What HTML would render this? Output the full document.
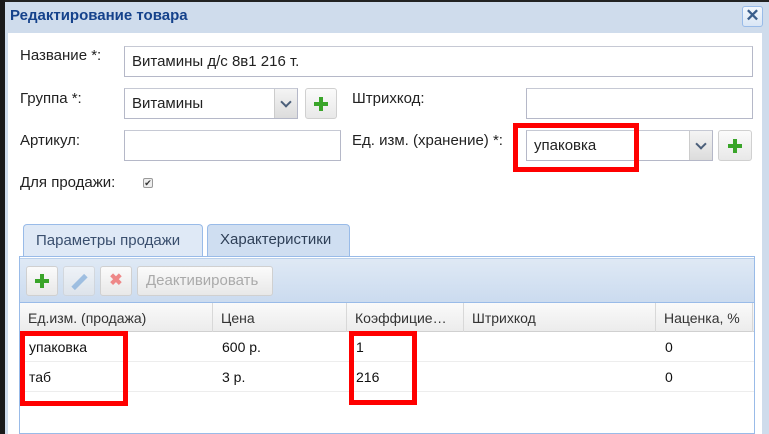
<!DOCTYPE html>
<html><head><meta charset="utf-8"><style>
*{box-sizing:border-box}
body{margin:0;width:769px;height:434px;overflow:hidden;background:#cfdcec;font-family:"Liberation Sans",sans-serif;font-size:14px;color:#222;position:relative}
.a{position:absolute}
.inp{position:absolute;background:#fff;border:1px solid #b5b8c8;border-top-color:#c6c9d4;height:31px;padding:6px 7px;font-size:15px}
.trig{position:absolute;top:0;right:0;width:23px;height:29px;background:linear-gradient(#f4f4f4,#dcdcdc);border-left:1px solid #ccc}
.trig:after{content:"";position:absolute;left:7px;top:9px;width:6px;height:6px;border-right:2px solid #4b5f7a;border-bottom:2px solid #4b5f7a;transform:rotate(45deg)}
.btn{position:absolute;border:1px solid #d0d0d0;border-radius:3px;background:linear-gradient(#fbfbfb,#e8e8e8);height:31px}
.plus{position:absolute;left:50%;top:50%;width:14px;height:14px;margin:-7px}
.plus:before,.plus:after{content:"";position:absolute;background:#3aa52a}
.plus:before{left:5px;top:0;width:4px;height:14px}.plus:after{top:5px;left:0;height:4px;width:14px}
.lbl{position:absolute;font-size:15px;color:#222}
.red{position:absolute;border:5px solid #f00}
.th{position:absolute;top:303px;height:29px;border-right:1px solid #d8d8d8;padding:7px 8px;font-size:14px;color:#333}
.td{position:absolute;font-size:14px;color:#111}
</style></head><body>
<div class="a" style="left:0;top:0;width:769px;height:2px;background:#222"></div>
<div class="a" style="left:0;top:0;width:5px;height:434px;background:#1a1a1a"></div>
<div class="a" style="left:10px;top:7px;font-weight:bold;font-size:15px;color:#15428b">Редактирование товара</div>
<div class="a" style="left:742px;top:6px;width:21px;height:21px;border:1px solid #99bbe8;border-radius:3px;background:linear-gradient(#f4f8fd,#d9e6f5);color:#3a5e8c;font-weight:bold;font-size:17px;text-align:center;line-height:18px">✕</div>
<div class="a" style="left:8px;top:33px;width:754px;height:401px;background:#fff"></div>

<div class="lbl" style="left:20px;top:47px">Название *:</div>
<div class="inp" style="left:124px;top:46px;width:629px">Витамины д/с 8в1 216 т.</div>
<div class="lbl" style="left:20px;top:90px">Группа *:</div>
<div class="inp" style="left:124px;top:88px;width:174px">Витамины<div class="trig"></div></div>
<div class="btn" style="left:305px;top:88px;width:32px"><div class="plus"></div></div>
<div class="lbl" style="left:352px;top:90px">Штрихкод:</div>
<div class="inp" style="left:526px;top:88px;width:227px"></div>
<div class="lbl" style="left:20px;top:132px">Артикул:</div>
<div class="inp" style="left:124px;top:130px;width:217px"></div>
<div class="lbl" style="left:352px;top:132px">Ед. изм. (хранение) *:</div>
<div class="inp" style="left:526px;top:130px;width:187px">упаковка<div class="trig"></div></div>
<div class="btn" style="left:718px;top:130px;width:34px"><div class="plus"></div></div>
<div class="red" style="left:513px;top:123px;width:126px;height:49px"></div>
<div class="lbl" style="left:20px;top:174px">Для продажи:</div>
<div class="a" style="left:143px;top:178px;width:10px;height:10px;border:1px solid #999;border-radius:2px;background:#eee;font-size:9px;line-height:8px;text-align:center;color:#333">✔</div>

<div class="a" style="left:23px;top:224px;width:180px;height:33px;border:1px solid #99bbe8;border-bottom:none;border-radius:4px 4px 0 0;background:#dfe9f6;color:#3a4f6e;padding:7px 12px;font-size:15px">Параметры продажи</div>
<div class="a" style="left:207px;top:224px;width:143px;height:32px;border:1px solid #99bbe8;border-bottom:none;border-radius:4px 4px 0 0;background:#cfdef1;color:#2e3f57;padding:6px 12px;font-size:15px">Характеристики</div>
<div class="a" style="left:19px;top:256px;width:736px;height:178px;border:1px solid #99bbe8;background:#fff"></div>
<div class="a" style="left:20px;top:258px;width:734px;height:45px;background:linear-gradient(#dfe9f5,#cbdbef);border-top:1px solid #b9cfea;border-bottom:1px solid #99bbe8"></div>
<div class="btn" style="left:26px;top:266px;width:32px;height:30px"><div class="plus"></div></div>
<div class="btn" style="left:63px;top:266px;width:32px;height:30px;opacity:.6"><div class="a" style="left:13px;top:6px;width:5px;height:18px;background:#7aa7d6;transform:rotate(45deg)"></div></div>
<div class="btn" style="left:100px;top:266px;width:32px;height:30px;color:#e88;font-weight:bold;text-align:center;line-height:28px;font-size:16px">✖</div>
<div class="btn" style="left:137px;top:266px;width:136px;height:30px;color:#aaa;padding:5px 8px;font-size:15px">Деактивировать</div>

<div class="a" style="left:20px;top:303px;width:734px;height:29px;background:linear-gradient(#fafafa,#ececec);border-bottom:1px solid #d0d0d0"></div>
<div class="th" style="left:20px;width:193px">Ед.изм. (продажа)</div>
<div class="th" style="left:213px;width:134px">Цена</div>
<div class="th" style="left:347px;width:117px">Коэффицие…</div>
<div class="th" style="left:464px;width:192px">Штрихкод</div>
<div class="th" style="left:656px;width:97px">Наценка, %</div>
<div class="a" style="left:20px;top:361px;width:734px;height:1px;background:#ededed"></div>
<div class="a" style="left:20px;top:391px;width:734px;height:1px;background:#ededed"></div>
<div class="td" style="left:29px;top:339px">упаковка</div>
<div class="td" style="left:222px;top:339px">600 р.</div>
<div class="td" style="left:356px;top:339px">1</div>
<div class="td" style="left:665px;top:339px">0</div>
<div class="td" style="left:29px;top:369px">таб</div>
<div class="td" style="left:222px;top:369px">3 р.</div>
<div class="td" style="left:356px;top:369px">216</div>
<div class="td" style="left:665px;top:369px">0</div>
<div class="red" style="left:20px;top:331px;width:108px;height:75px"></div>
<div class="red" style="left:349px;top:331px;width:68px;height:74px"></div>
</body></html>
